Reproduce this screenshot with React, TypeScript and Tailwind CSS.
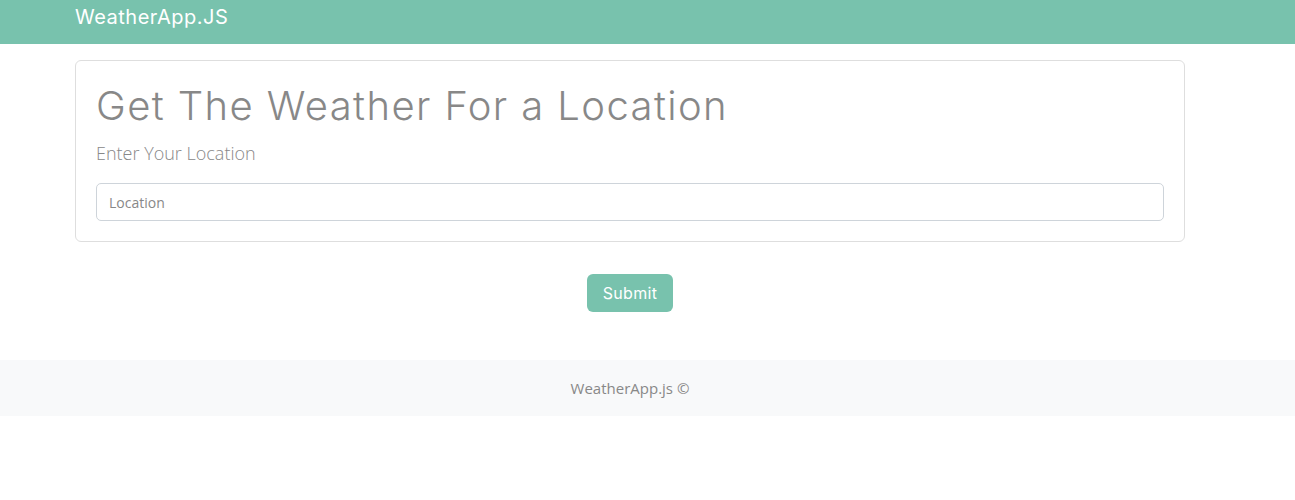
const App = () => {
  return (
    <div className="min-h-[500px] bg-white" style={{ fontFamily: '"Open Sans", sans-serif' }}>
      <nav className="h-[44px] bg-[#78c2ad]">
        <div className="ml-[75px] pt-[2px] text-[20px] tracking-[0.5px] text-white font-['Inter',sans-serif]">
          WeatherApp.JS
        </div>
      </nav>

      <main className="ml-[75px] w-[1110px] pt-[16px]">
        <div className="rounded-[6px] border border-[#dedede] px-[20px] pt-[21px] pb-[20px]">
          <h1 className="text-[40px] leading-[48px] font-light tracking-[1.4px] text-[#888] font-['Inter',sans-serif]">
            Get The Weather For a Location
          </h1>
          <p className="mt-[11px] text-[18px] leading-[24px] font-light text-[#888]">Enter Your Location</p>
          <input
            type="text"
            placeholder="Location"
            className="mt-[18px] h-[38px] w-full rounded-[5px] border border-[#ced4da] px-[12px] text-[14px] text-[#888] placeholder:text-[#888] outline-none"
          />
        </div>

        <div className="mt-[32px] flex justify-center">
          <button className="h-[38px] w-[86px] rounded-[6px] bg-[#78c2ad] text-[16px] tracking-[0.3px] text-white font-['Inter',sans-serif]">
            Submit
          </button>
        </div>
      </main>

      <footer className="mt-[48px] h-[56px] bg-[#f8f9fa]">
        <div className="ml-[75px] flex h-full w-[1110px] items-center justify-center text-[15px] text-[#888]">
          WeatherApp.js ©
        </div>
      </footer>
    </div>
  );
};

export default App;
